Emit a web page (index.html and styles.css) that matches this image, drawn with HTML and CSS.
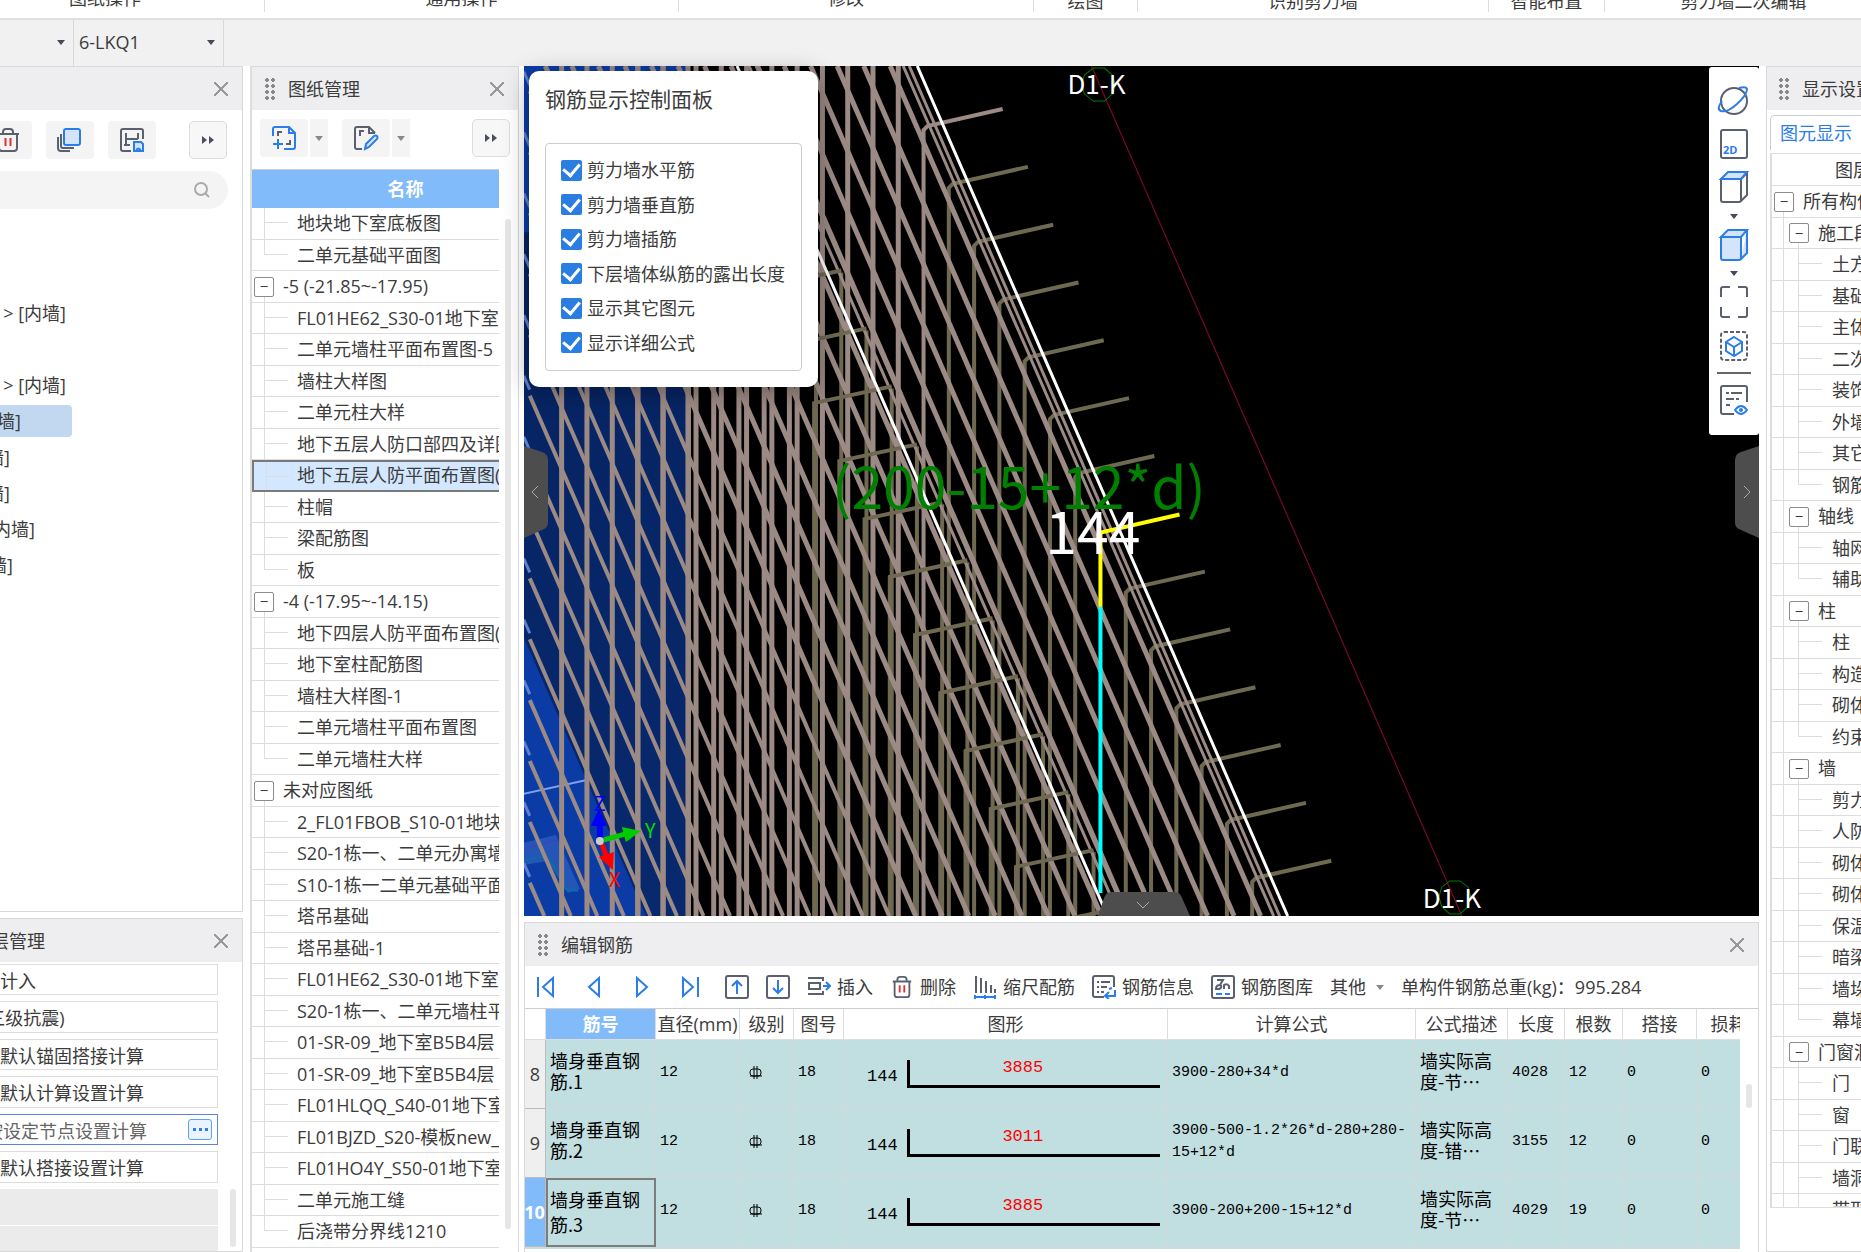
FILE: index.html
```html
<!DOCTYPE html>
<html lang="zh-CN">
<head>
  <meta charset="UTF-8">
  <meta name="viewport" content="width=device-width, initial-scale=1.0">
  <title>编辑钢筋</title>
  <link rel="stylesheet" href="styles.css">
</head>
<body>

<nav class="ribbon">
  <div class="group g1">图纸操作 <i class="caret"></i></div>
  <div class="group g2">通用操作 <i class="caret"></i></div>
  <div class="group g3">修改 <i class="caret"></i></div>
  <div class="group low g4">绘图</div>
  <div class="group low g5">识别剪力墙</div>
  <div class="group low g6">智能布置</div>
  <div class="group low g7">剪力墙二次编辑</div>
</nav>

<div class="selectors">
  <button class="combo short" aria-label="类型"><i class="caret"></i></button>
  <button class="combo"><span>6-LKQ1</span><i class="caret"></i></button>
</div>

<main>
  <!-- 构件列表 -->
  <div class="side">
    <section class="panel list-panel">
      <header class="panel-head"><span></span><button class="close" aria-label="关闭"></button></header>
      <div class="tools left-tools">
        <button class="tool" aria-label="删除"><svg width="26" height="26" viewBox="0 0 26 26"><g class="ink"><path d="M2 7h22M8 7V5q0-3 3-3h4q3 0 3 3v2M4 7v14q0 3 3 3h12q3 0 3-3V7"/></g><path class="red" d="M10.500 11v8M15.500 11v8"/></svg></button>
        <button class="tool" aria-label="复制"><svg width="26" height="26" viewBox="0 0 26 26"><path class="blue tint" d="M9 2h12q2 0 2 2v12q0 2-2 2H9q-2 0-2-2V4q0-2 2-2z"/><path class="ink" d="M4 7v12q0 2 2 2h11M1 10v11q0 3 3 3h9"/></svg></button>
        <button class="tool" aria-label="存档"><svg width="26" height="26" viewBox="0 0 26 26"><path class="ink" d="M12 24H4q-2 0-2-2V4q0-2 2-2h18q2 0 2 2v8M7 6v12M7 12h12M19 6v6M5 18h6"/><path class="blue tint" d="M15 15h7l2 2v7h-9z"/><path class="blue" d="M17 24q2-5 5 0"/></svg></button>
        <button class="more" aria-label="更多"><svg width="18" height="12" viewBox="0 0 18 12"><path class="solid" d="M3 2l5 4-5 4zM10 2l5 4-5 4z"/></svg></button>
      </div>
      <div class="search"><input type="text" aria-label="搜索"><svg width="18" height="18" viewBox="0 0 18 18"><circle cx="8" cy="8" r="6"/><path d="M12 12l4 4"/></svg></div>
      <ul class="parts">
        <li>&gt; [内墙]</li>
        <li class="blank"></li>
        <li>&gt; [内墙]</li>
        <li class="on">[内墙]</li>
        <li class="end10">[内墙]</li>
        <li class="end10">[内墙]</li>
        <li class="end35">[内墙]</li>
        <li class="end13">[内墙]</li>
      </ul>
    </section>

    <!-- 属性列表 -->
    <section class="panel props-panel">
      <header class="panel-head"><span class="cut-title">图层管理</span><button class="close" aria-label="关闭"></button></header>
      <div class="props">
        <form>
          <input type="text" aria-label="计入方式" value="不计入">
          <input type="text" aria-label="抗震等级" value="(三级抗震)">
          <input type="text" aria-label="锚固搭接" value="按默认锚固搭接计算">
          <input type="text" aria-label="计算设置" value="按默认计算设置计算">
          <div class="field"><input type="text" aria-label="节点设置" value="按设定节点设置计算"><button type="button" class="dots" aria-label="选择"><i></i><i></i><i></i></button></div>
          <input type="text" aria-label="搭接设置" value="按默认搭接设置计算">
          <div class="grey"></div>
          <div class="grey"></div>
        </form>
        <div class="scroll"></div>
      </div>
    </section>
  </div>

  <!-- 图纸管理 -->
  <section class="panel drawings">
    <header class="panel-head"><i class="grip"></i><h2>图纸管理</h2><button class="close" aria-label="关闭"></button></header>
    <div class="tools">
      <div class="split">
        <button class="tool" aria-label="添加图纸"><svg width="26" height="26" viewBox="0 0 26 26"><path class="blue" d="M2 11V4q0-2 2-2h14l6 6v14q0 2-2 2h-9M18 2v6h6M2 19h10M7 14v10"/><path class="ink" d="M7 11V7h4M19 15v4h-4"/></svg></button>
        <button class="drop" aria-label="展开"><i class="caret grey-caret"></i></button>
      </div>
      <div class="split">
        <button class="tool" aria-label="编辑图纸"><svg width="26" height="26" viewBox="0 0 26 26"><path class="ink" d="M9 24H4q-2 0-2-2V4q0-2 2-2h12l6 6M16 2v6h6M7 11V6h4"/><path class="blue tint" d="M12 24l1-5 8-8q2-1 3 0t0 3l-8 8z"/></svg></button>
        <button class="drop" aria-label="展开"><i class="caret grey-caret"></i></button>
      </div>
      <button class="more" aria-label="更多"><svg width="18" height="12" viewBox="0 0 18 12"><path class="solid" d="M3 2l5 4-5 4zM10 2l5 4-5 4z"/></svg></button>
    </div>
    <div class="drawing-body">
      <div class="drawing-tree">
        <div class="tree-title">名称</div>
        <ul class="tree">
          <li>地块地下室底板图</li>
          <li class="last">二单元基础平面图</li>
          <li class="node"><button>−</button>-5 (-21.85~-17.95)</li>
          <li>FL01HE62_S30-01地下室</li>
          <li>二单元墙柱平面布置图-5</li>
          <li>墙柱大样图</li>
          <li>二单元柱大样</li>
          <li>地下五层人防口部四及详图</li>
          <li class="current">地下五层人防平面布置图(</li>
          <li>柱帽</li>
          <li>梁配筋图</li>
          <li class="last">板</li>
          <li class="node"><button>−</button>-4 (-17.95~-14.15)</li>
          <li>地下四层人防平面布置图(</li>
          <li>地下室柱配筋图</li>
          <li>墙柱大样图-1</li>
          <li>二单元墙柱平面布置图</li>
          <li class="last">二单元墙柱大样</li>
          <li class="node"><button>−</button>未对应图纸</li>
          <li>2_FL01FBOB_S10-01地块</li>
          <li>S20-1栋一、二单元办寓墙</li>
          <li>S10-1栋一二单元基础平面</li>
          <li>塔吊基础</li>
          <li>塔吊基础-1</li>
          <li>FL01HE62_S30-01地下室</li>
          <li>S20-1栋一、二单元墙柱平</li>
          <li>01-SR-09_地下室B5B4层</li>
          <li>01-SR-09_地下室B5B4层</li>
          <li>FL01HLQQ_S40-01地下室</li>
          <li>FL01BJZD_S20-模板new_</li>
          <li>FL01HO4Y_S50-01地下室</li>
          <li>二单元施工缝</li>
          <li class="last">后浇带分界线1210</li>
        </ul>
      </div>
      <div class="scroll"></div>
    </div>
  </section>

  <div class="center">
    <!-- 三维视图 -->
    <section class="view">
      <svg class="scene" viewBox="524 66 1234 849" preserveAspectRatio="xMidYMid slice">
        <defs>
          <linearGradient id="wall" x1="0" y1="0" x2="0" y2="1"><stop offset="0" stop-color="#06225e"/><stop offset="1" stop-color="#08296e"/></linearGradient>
        </defs>
        <rect x="524" y="66" width="1234" height="849" fill="#000"/>
        <rect x="524" y="66" width="162" height="849" fill="url(#wall)"/>
        <path d="M524 637L646 915H524zM524 66h162v14H530V232h-6z" fill="#0b3ca6"/>
        <path d="M524 842l32-8 24 54-12 4-20-32-24 4z" fill="#2456b8"/>
        <path d="M524 848l32-9" stroke="#4a3cc0"/>
        <path d="M524 860q22-8 28 2l14 26 12 2" fill="none" stroke="#0f6aa8" stroke-width="2"/>
        <path d="M524 793l64-14" stroke="#7f9fe8" stroke-width="2"/>
        <g id="back"></g>
        <g id="bars"></g>
        <g id="hooks"></g>
        <path d="M737 66L1107 915M917 66L1287 915" stroke="#fff" stroke-width="3"/>
        <path d="M1091 66L1461 915" stroke="#7a0826" stroke-width="1.200"/>
        <path d="M1093 68h11l8 7 3 10-3 9-8 7h-11l-9-7-3-9 3-10zM1449 880h10l8 6 3 10-3 10-8 7h-10l-8-7-3-10 3-10z" fill="none" stroke="#007a00"/>
        <path d="M1100 606V892" stroke="#0ff" stroke-width="4"/>
        <path d="M1179 514L1100 532V606" fill="none" stroke="#ff0" stroke-width="4"/>
        <text class="mark" x="1067" y="94">D1-K</text>
        <text class="mark" x="1422" y="907">D1-K</text>
        <text class="formula" x="832" y="508">(200-15+12*d)</text>
        <text class="bend" x="1045" y="553">144</text>
        <g class="axis">
          <path d="M600 838V820" stroke="#00f" stroke-width="6"/><path d="M599 808l8 17h-16z" fill="#00f"/>
          <path d="M604 839l22-6" stroke="#0c0" stroke-width="5"/><path d="M641 830l-19-4 4 15z" fill="#0c0"/>
          <path d="M602 843l5 14" stroke="#f00" stroke-width="5"/><path d="M613 869l-14-13 15-5z" fill="#f00"/>
          <circle cx="600" cy="840" r="4" fill="#ccc"/>
          <text x="594" y="810" fill="#00f">Z</text>
          <text x="645" y="837" fill="#0d0">Y</text>
          <text x="609" y="886" fill="#f00">X</text>
        </g>
      </svg>

      <form class="control-card">
        <h3>钢筋显示控制面板</h3>
        <div class="options">
          <label><input type="checkbox" checked>剪力墙水平筋</label>
          <label><input type="checkbox" checked>剪力墙垂直筋</label>
          <label><input type="checkbox" checked>剪力墙插筋</label>
          <label><input type="checkbox" checked>下层墙体纵筋的露出长度</label>
          <label><input type="checkbox" checked>显示其它图元</label>
          <label><input type="checkbox" checked>显示详细公式</label>
        </div>
      </form>

      <div class="view-tools">
        <button aria-label="动态观察"><svg width="34" height="34" viewBox="0 0 34 34"><circle class="ink" cx="17" cy="17" r="13"/><path class="blue" d="M5 17q-6 8-1 10 6 2 16-7T30 5q-1-3-8-1"/></svg></button>
        <button aria-label="二维"><svg width="34" height="34" viewBox="0 0 34 34"><rect class="ink" x="4" y="3" width="26" height="28" rx="2"/><text x="6" y="27">2D</text></svg></button>
        <button aria-label="视图"><svg width="34" height="34" viewBox="0 0 34 34"><path class="ink" d="M4 9h20v21q0 2-2 2H6q-2 0-2-2zM24 9l6-6v22l-6 6"/><path class="blue tint" d="M4 9l7-7h19l-6 7z"/></svg></button>
        <i class="caret"></i>
        <button aria-label="着色"><svg width="34" height="34" viewBox="0 0 34 34"><path class="blue tint" d="M4 9h20v21q0 2-2 2H6q-2 0-2-2zM4 9l7-7h19l-6 7zM30 2v23l-6 6"/></svg></button>
        <i class="caret"></i>
        <button aria-label="全屏"><svg width="34" height="34" viewBox="0 0 34 34"><path class="ink" d="M4 12V4q0-2 2-2h7M21 2h7q2 0 2 2v8M30 22v8q0 2-2 2h-7M13 32H6q-2 0-2-2v-8"/></svg></button>
        <button aria-label="局部三维"><svg width="34" height="34" viewBox="0 0 34 34"><rect class="ink dash" x="4" y="3" width="26" height="28" rx="3"/><path class="blue" d="M17 8l8 5v9l-8 5-8-5v-9zM9 13l8 5 8-5M17 18v9"/></svg></button>
        <hr>
        <button aria-label="显示设置"><svg width="34" height="34" viewBox="0 0 34 34"><path class="ink" d="M30 19V5q0-2-2-2H6q-2 0-2 2v24q0 2 2 2h11M9 10h3M14 10h11M9 16h8M19 16h3M9 22h4"/><path class="blue" d="M18 27q6-8 12 0-6 8-12 0z"/><circle cx="24" cy="27" r="2" fill="#2b7de9"/></svg></button>
      </div>

      <button class="fold fold-left" aria-label="收起左侧"><svg width="24" height="92" viewBox="0 0 24 92"><path d="M0 0l18 6q6 2 6 8v63q0 5-6 7L0 92z"/><polyline points="14,40 8,46 14,52"/></svg></button>
      <button class="fold fold-right" aria-label="收起右侧"><svg width="24" height="92" viewBox="0 0 24 92"><path d="M24 0L6 6q-6 2-6 8v63q0 5 6 7l18 8z"/><polyline points="9,40 15,46 9,52"/></svg></button>
      <button class="fold fold-bottom" aria-label="收起下方"><svg width="92" height="24" viewBox="0 0 92 24"><path d="M0 24L6 6q2-6 8-6h63q5 0 7 6l8 18z"/><polyline points="39,10 45,16 51,10"/></svg></button>
    </section>

    <!-- 编辑钢筋 -->
    <section class="panel rebar">
      <header class="panel-head"><i class="grip"></i><h2>编辑钢筋</h2><button class="close" aria-label="关闭"></button></header>
      <div class="rebar-tools">
        <div class="nav-btns">
          <button aria-label="首条"><svg width="20" height="24" viewBox="0 0 20 24"><path class="blue" d="M2 2v20M17 3v18L7 12z"/></svg></button>
          <button aria-label="上一条"><svg width="20" height="24" viewBox="0 0 20 24"><path class="blue" d="M15 3v18L5 12z"/></svg></button>
          <button aria-label="下一条"><svg width="20" height="24" viewBox="0 0 20 24"><path class="blue" d="M5 3v18l10-9z"/></svg></button>
          <button aria-label="末条"><svg width="20" height="24" viewBox="0 0 20 24"><path class="blue" d="M18 2v20M3 3v18l10-9z"/></svg></button>
        </div>
        <button aria-label="上移"><svg width="24" height="24" viewBox="0 0 24 24"><rect class="ink" x="1" y="1" width="22" height="22" rx="2"/><path class="blue" d="M12 19V6M7 11l5-5 5 5"/></svg></button>
        <button aria-label="下移"><svg width="24" height="24" viewBox="0 0 24 24"><rect class="ink" x="1" y="1" width="22" height="22" rx="2"/><path class="blue" d="M12 5v13M7 13l5 5 5-5"/></svg></button>
        <button><svg width="24" height="24" viewBox="0 0 24 24"><path class="ink" d="M1 3h15v3M2 8h11v6H2zM1 19h15v-3"/><path class="blue" d="M16 11h7M19 7l4 4-4 4"/></svg>插入</button>
        <button><svg width="24" height="24" viewBox="0 0 26 26"><g class="ink"><path d="M3 7h20M8 7V5q0-3 3-3h4q3 0 3 3v2M5 7v14q0 3 3 3h10q3 0 3-3V7"/></g><path class="red" d="M10.500 11v8M15.500 11v8"/></svg>删除</button>
        <button><svg width="24" height="24" viewBox="0 0 24 24"><path class="ink" d="M3 1v17M8 3v15M13 6v12M18 10v8M22 14v4"/><path class="blue" d="M2 22h20M2 20v4M12 20v4M22 20v4"/></svg>缩尺配筋</button>
        <button><svg width="24" height="24" viewBox="0 0 24 24"><path class="ink" d="M22 12V3q0-2-2-2H3Q1 1 1 3v17q0 2 2 2h9M5 7h2M9 7h9M5 12h2M9 12h6M5 17h2M9 17h3"/><path class="blue" d="M23 15v6h-9M17 17l-4 4 4 3M17 14l3-1"/></svg>钢筋信息</button>
        <button><svg width="24" height="24" viewBox="0 0 24 24"><rect class="ink" x="1" y="1" width="22" height="22" rx="2"/><path class="ink" d="M6 5h6l-3 5q-4 0-4 4h3q3-1 2-4M13 14v-4q3-2 5 1v3"/><path class="blue" d="M5 19h6M14 19h5"/></svg>钢筋图库</button>
        <button>其他<i class="caret grey-caret"></i></button>
        <span>单构件钢筋总重(kg)：995.284</span>
      </div>
      <div class="grid-wrap">
        <div class="grid-clip">
          <table>
            <colgroup><col class="c-no"><col class="c-name"><col class="c-dia"><col class="c-lvl"><col class="c-fig"><col class="c-shape"><col class="c-calc"><col class="c-desc"><col class="c-len"><col class="c-num"><col class="c-lap"><col class="c-loss"></colgroup>
            <thead>
              <tr><th></th><th class="active">筋号</th><th>直径(mm)</th><th>级别</th><th>图号</th><th>图形</th><th>计算公式</th><th>公式描述</th><th>长度</th><th>根数</th><th>搭接</th><th>损耗</th></tr>
            </thead>
            <tbody>
              <tr>
                <th>8</th><td class="cn">墙身垂直钢筋.1</td><td>12</td>
                <td class="lvl"><svg width="16" height="16" viewBox="0 0 16 16"><path d="M6 1v13M9 1v13M2 11h12"/><rect x="2" y="4" width="11" height="7" rx="3"/></svg></td>
                <td>18</td><td class="shape"><div><span>144</span><div class="bar">3885</div></div></td>
                <td>3900-280+34*d</td><td class="cn">墙实际高度-节…</td><td>4028</td><td>12</td><td>0</td><td>0</td>
              </tr>
              <tr>
                <th>9</th><td class="cn">墙身垂直钢筋.2</td><td>12</td>
                <td class="lvl"><svg width="16" height="16" viewBox="0 0 16 16"><path d="M6 1v13M9 1v13M2 11h12"/><rect x="2" y="4" width="11" height="7" rx="3"/></svg></td>
                <td>18</td><td class="shape"><div><span>144</span><div class="bar">3011</div></div></td>
                <td>3900-500-1.2*26*d-280+280-<br>15+12*d</td><td class="cn">墙实际高度-错…</td><td>3155</td><td>12</td><td>0</td><td>0</td>
              </tr>
              <tr class="picked">
                <th>10</th><td class="cn editing">墙身垂直钢筋.3</td><td>12</td>
                <td class="lvl"><svg width="16" height="16" viewBox="0 0 16 16"><path d="M6 1v13M9 1v13M2 11h12"/><rect x="2" y="4" width="11" height="7" rx="3"/></svg></td>
                <td>18</td><td class="shape"><div><span>144</span><div class="bar">3885</div></div></td>
                <td>3900-200+200-15+12*d</td><td class="cn">墙实际高度-节…</td><td>4029</td><td>19</td><td>0</td><td>0</td>
              </tr>
            </tbody>
          </table>
        </div>
        <div class="scroll"></div>
      </div>
    </section>
  </div>

  <!-- 显示设置 -->
  <section class="panel display">
    <header class="panel-head"><i class="grip"></i><h2>显示设置</h2></header>
    <div class="tabs"><button>图元显示</button></div>
    <div class="layer-box">
      <div class="layer-title">图层</div>
      <ul class="tree deep">
        <li class="node root"><button>−</button>所有构件</li>
        <li class="node"><button>−</button>施工段</li>
        <li>土方</li>
        <li>基础</li>
        <li>主体</li>
        <li>二次</li>
        <li>装饰</li>
        <li>外墙</li>
        <li>其它</li>
        <li class="last">钢筋</li>
        <li class="node"><button>−</button>轴线</li>
        <li>轴网</li>
        <li class="last">辅助</li>
        <li class="node"><button>−</button>柱</li>
        <li>柱</li>
        <li>构造</li>
        <li>砌体</li>
        <li class="last">约束</li>
        <li class="node"><button>−</button>墙</li>
        <li>剪力</li>
        <li>人防</li>
        <li>砌体</li>
        <li>砌体</li>
        <li>保温</li>
        <li>暗梁</li>
        <li>墙垛</li>
        <li class="last">幕墙</li>
        <li class="node"><button>−</button>门窗洞</li>
        <li>门</li>
        <li>窗</li>
        <li>门联</li>
        <li>墙洞</li>
        <li>带形</li>
      </ul>
    </div>
  </section>
</main>

<script src="script.js"></script>
</body>
</html>
```
FILE: styles.css
```css
* { margin: 0; padding: 0; box-sizing: border-box; }
body {
  height: 100vh;
  display: flex;
  flex-direction: column;
  overflow: hidden;
  background: #fff;
  color: #3c3c3c;
  font: 18px/26px "Open Sans", "Noto Sans CJK SC", sans-serif;
  white-space: nowrap;
}
button, input { font: inherit; color: inherit; border: none; background: none; }
button { display: flex; align-items: center; justify-content: center; cursor: pointer; }
h2, h3 { font-size: 18px; font-weight: normal; }
ul { list-style: none; }
svg { flex: none; display: block; }

.ink { fill: none; stroke: #5a6070; stroke-width: 2; }
.blue { fill: none; stroke: #2b7de9; stroke-width: 2; }
.red { fill: none; stroke: #e03030; stroke-width: 2; }
.tint { fill: #d3e4fb; }
.dash { stroke-dasharray: 4 2; }
.solid { fill: #4a4f5c; }

.caret {
  flex: none;
  border: 4px solid transparent;
  border-top: 5px solid #444a58;
  border-bottom: none;
}
.grey-caret { border-top-color: #888; }

/* 顶部功能区 */
.ribbon {
  flex: none;
  height: 20px;
  display: flex;
  overflow: hidden;
  border-bottom: 2px solid #e0e0e0;
}
.group {
  flex: none;
  height: 12px;
  display: flex;
  align-items: flex-end;
  justify-content: center;
  gap: 12px;
  line-height: 18px;
  padding-bottom: 5px;
  border-right: 1px solid #ddd;
}
.group .caret { margin-bottom: 7px; }
.low { padding-bottom: 2px; }
.g1 { width: 299px; margin-left: -34px; }
.g2 { width: 414px; }
.g3 { width: 355px; }
.g4 { width: 104px; }
.g5 { width: 351px; }
.g6 { width: 116px; }
.g7 { width: 278px; }

.selectors {
  flex: none;
  height: 46px;
  display: flex;
  background: #f1f1f1;
}
.combo {
  width: 150px;
  justify-content: space-between;
  padding: 0 8px 2px 5px;
  border-right: 1px solid #d8d8d8;
}
.short { width: 74px; justify-content: flex-end; }

main { flex: 1; min-height: 0; display: flex; }

.panel {
  display: flex;
  flex-direction: column;
  min-height: 0;
  border: 1px solid #d9d9d9;
  background: #fff;
}
.panel-head {
  flex: none;
  height: 43px;
  display: flex;
  align-items: center;
  padding: 0 14px 0 13px;
  background: #eeeef0;
}
.grip {
  width: 10px;
  height: 22px;
  margin-right: 13px;
  background: radial-gradient(circle at 2px 2px, #888 2px, transparent 2px) 0 0 / 6px 6px;
}
.close {
  width: 14px;
  height: 14px;
  margin-left: auto;
  background:
    linear-gradient(45deg, transparent 46%, #999 46%, #999 54%, transparent 54%),
    linear-gradient(-45deg, transparent 46%, #999 46%, #999 54%, transparent 54%);
}

.tools { display: flex; align-items: flex-start; height: 59px; padding: 9px 8px 0; }
.tool { width: 48px; height: 38px; background: #f4f4f4; border-radius: 4px; }
.more {
  width: 38px;
  height: 38px;
  margin-left: auto;
  background: #f7f7f7;
  border: 1px solid #ddd;
  border-radius: 5px;
}
.split { display: flex; gap: 2px; margin-right: 14px; }
.drop { width: 18px; height: 38px; background: #f4f4f4; }

.scroll { background: #e6e6e6; border-radius: 3px; width: 6px; }

/* 左侧 */
.side { flex: none; width: 243px; margin-right: 7px; display: flex; flex-direction: column; gap: 6px; }
.side .panel { border-left: none; }
.list-panel { flex: 1; }
.left-tools { height: 61px; padding: 11px 15px 0 0; gap: 14px; margin-left: -16px; }
.search {
  width: 228px;
  height: 38px;
  display: flex;
  align-items: center;
  padding-right: 17px;
  background: #f4f4f4;
  border-radius: 0 19px 19px 0;
}
.search input { flex: 1; min-width: 0; }
.search svg { fill: none; stroke: #aaa; stroke-width: 2; }
.parts { padding-top: 88px; }
.parts li {
  width: 66px;
  height: 32px;
  margin-bottom: 4px;
  display: flex;
  align-items: center;
  justify-content: flex-end;
  overflow: hidden;
}
.parts .on { width: 72px; padding-right: 51px; background: #c1d8f0; border-radius: 0 4px 4px 0; }
.parts .end10 { width: 10px; }
.parts .end13 { width: 13px; }
.parts .end35 { width: 35px; }

.props-panel { flex: none; height: 334px; }
.cut-title { width: 45px; margin-left: -13px; display: flex; justify-content: flex-end; overflow: hidden; }
.props { flex: 1; min-height: 0; display: flex; overflow: hidden; }
.props form {
  flex: none;
  width: 242px;
  margin-left: -24px;
  padding-top: 2px;
  display: flex;
  flex-direction: column;
  gap: 6px;
}
.props form > * { flex: none; height: 31px; }
.props form > :nth-child(even) { height: 32px; }
.props form > input { padding-left: 5px; border: 1px solid #ddd; }
.field {
  display: flex;
  align-items: center;
  padding-right: 5px;
  border: 1px solid #5b84dc;
}
.field input { flex: 1; min-width: 0; height: 29px; padding-left: 8px; color: #666; }
.dots { width: 24px; height: 21px; gap: 3px; border: 1px solid #5aa5ee; border-radius: 3px; background: #eaf3fd; }
.dots i { width: 3px; height: 3px; background: #2b7de9; }
.props form > .grey { height: 36px; margin-bottom: -5px; background: #ebebeb; }
.props .scroll { height: 58px; margin: auto 0 4px 12px; }

/* 图纸管理 */
.drawings { flex: none; width: 269px; margin-right: 5px; border-left: 2px solid #ddd; border-bottom: none; }
.drawing-body { flex: 1; min-height: 0; display: flex; }
.drawing-tree { width: 247px; overflow: hidden; border-top: 1px solid #ccc; }
.tree-title {
  height: 38px;
  line-height: 38px;
  padding-left: 60px;
  text-align: center;
  font-weight: bold;
  color: #fff;
  background: #81bbf9;
}
.drawing-body .scroll { margin: 50px 0 23px 6px; }

.tree li {
  height: 31px;
  line-height: 31px;
  padding-left: 45px;
  overflow: hidden;
  border-bottom: 1px solid #dcdcdc;
  background:
    linear-gradient(#ddd, #ddd) 12px 0 / 1px 100% no-repeat,
    linear-gradient(#ddd, #ddd) 12px 14px / 24px 1px no-repeat;
}
.tree li:nth-child(odd) { height: 32px; }
.tree .last {
  background:
    linear-gradient(#ddd, #ddd) 12px 0 / 1px 14px no-repeat,
    linear-gradient(#ddd, #ddd) 12px 14px / 24px 1px no-repeat;
}
.tree .node {
  display: flex;
  align-items: center;
  padding-left: 2px;
  background: linear-gradient(#ddd, #ddd) 12px 25px / 1px 6px no-repeat;
}
.tree button {
  flex: none;
  width: 20px;
  height: 20px;
  margin-right: 9px;
  border: 1px solid #8c8c8c;
  border-radius: 2px;
  background: #fff;
  font-size: 15px;
  line-height: 15px;
}
.tree .current {
  border: 2px solid #7a7a7a;
  border-right: none;
  padding-left: 43px;
  line-height: 26px;
  background-color: #d3e8fe;
}

/* 视图 */
.center { flex: 1; min-width: 0; display: flex; flex-direction: column; gap: 6px; }
.view { flex: 1; min-height: 0; position: relative; z-index: 1; }
.scene { position: absolute; width: 100%; height: 100%; }
.scene text { font-family: "Noto Sans CJK SC", sans-serif; }
.mark { font-size: 26px; fill: #fff; }
.formula { font-size: 57px; fill: #008000; }
.bend { font-size: 57px; fill: #fff; }
.axis text { font-size: 20px; }

.control-card {
  position: absolute;
  left: 5px;
  top: 5px;
  width: 289px;
  padding: 13px 16px 16px;
  background: #fff;
  border-radius: 10px;
  box-shadow: 0 4px 24px rgba(0, 0, 0, 0.35);
}
.control-card h3 { font-size: 21px; line-height: 30px; margin-bottom: 29px; }
.options {
  padding: 9px 15px 10px;
  border: 1px solid #ccc;
  border-radius: 4px;
}
.options label { display: flex; align-items: center; height: 34px; }
.options label:nth-child(even) { height: 35px; }
.options input {
  appearance: none;
  width: 21px;
  height: 21px;
  margin-right: 5px;
  display: grid;
  place-items: center;
  background: #2a7de1;
  border-radius: 2px;
}
.options input:checked::before {
  content: "";
  width: 8px;
  height: 13px;
  margin-bottom: 4px;
  border: solid #fff;
  border-width: 0 3px 3px 0;
  transform: rotate(40deg);
}

.view-tools {
  position: absolute;
  right: 0;
  top: 1px;
  width: 50px;
  height: 368px;
  padding: 17px 0 18px;
  display: flex;
  flex-direction: column;
  align-items: center;
  justify-content: space-between;
  background: #fff;
  border-radius: 3px;
}
.view-tools text { font-size: 11px; font-weight: bold; fill: #2b7de9; }
.view-tools hr { width: 34px; border: none; border-top: 2px solid #666; }

.fold { position: absolute; }
.fold path { fill: #4d4d4d; }
.fold polyline { fill: none; stroke: #aaa; stroke-width: 1; }
.fold-left { left: 0; top: 380px; }
.fold-right { right: 0; top: 380px; }
.fold-bottom { left: 46.5%; bottom: 0; }

/* 编辑钢筋 */
.rebar { flex: none; height: 330px; border-bottom: none; }
.rebar-tools {
  flex: none;
  height: 42px;
  display: flex;
  align-items: center;
  gap: 17px;
  padding: 0 11px;
}
.rebar-tools button { gap: 6px; }
.nav-btns { display: flex; gap: 28px; margin-right: 8px; }
.rebar-tools .grey-caret { margin-left: 4px; }
.grid-wrap { flex: 1; display: flex; border-top: 1px solid #ccc; }
.grid-clip { flex: 1; min-width: 0; height: 240px; overflow: hidden; background: #c1dee0; }
.grid-wrap .scroll { height: 24px; margin: 75px 6px 0; }
table { width: calc(100% + 21px); table-layout: fixed; border-collapse: separate; border-spacing: 0; }
.c-no { width: 21px; }
.c-name { width: 110px; }
.c-dia { width: 84px; }
.c-lvl { width: 54px; }
.c-fig { width: 50px; }
.c-calc { width: 248px; }
.c-desc { width: 92px; }
.c-len { width: 57px; }
.c-num { width: 58px; }
.c-lap { width: 74px; }
.c-loss { width: 64px; }
thead th {
  height: 31px;
  font-weight: normal;
  background: #fff;
  border-right: 1px solid #ddd;
  border-bottom: 1px solid #ddd;
}
thead .active { background: #81bbf9; color: #fff; font-weight: bold; }
tbody th {
  font-weight: normal;
  background: #efefef;
  border-right: 1px solid #bbb;
  border-bottom: 1px solid #bbb;
}
tbody td {
  height: 69px;
  padding: 0 4px 2px;
  color: #000;
  font: 15px/22px "Liberation Mono", "Noto Sans CJK SC", monospace;
  background: #c1dee0;
  border-right: 1px solid #d3d8d8;
  border-bottom: 1px solid #d3d8d8;
}
tbody .cn {
  padding-bottom: 6px;
  font-size: 18px;
  line-height: 21px;
  white-space: normal;
  font-family: "Noto Sans CJK SC", sans-serif;
}
tbody .lvl { padding-left: 8px; }
.lvl svg { fill: none; stroke: #000; stroke-width: 1; }
tbody .shape { padding: 0 7px 0 23px; font-size: 17px; }
.shape > div { display: flex; gap: 9px; align-items: flex-end; }
.bar {
  flex: 1;
  height: 28px;
  padding-right: 24px;
  text-align: center;
  line-height: 16px;
  color: #f00;
  border: solid #000;
  border-width: 0 0 3px 3px;
}
.picked th { background: #81bbf9; color: #fff; font-weight: bold; text-indent: -1px; }
tbody .editing { line-height: 25px; padding: 0 2px 2px; border: 2px solid #7d7d7d; }

/* 显示设置 */
.display { flex: none; width: 95px; margin-left: 7px; border-right: none; overflow: hidden; }
.display .panel-head { padding-left: 12px; }
.display .grip { flex: none; }
.tabs { flex: none; height: 43px; display: flex; padding: 5px 0 0 3px; }
.tabs button {
  flex: none;
  width: 96px;
  height: 35px;
  justify-content: flex-start;
  padding-left: 9px;
  color: #2b7de9;
  border: 1px solid #ccc;
  border-bottom: none;
  border-radius: 5px 5px 0 0;
}
.layer-box { height: 1055px; overflow: hidden; margin-left: 3px; border: 1px solid #ddd; border-left: 2px solid #ddd; border-right: none; }
.layer-title { height: 32px; padding-left: 63px; line-height: 32px; border-bottom: 1px solid #ddd; }
.deep li {
  padding-left: 60px;
  background:
    linear-gradient(#ddd, #ddd) 11px 0 / 1px 100% no-repeat,
    linear-gradient(#ddd, #ddd) 26px 0 / 1px 100% no-repeat,
    linear-gradient(#ddd, #ddd) 26px 14px / 24px 1px no-repeat;
}
.deep .last {
  background:
    linear-gradient(#ddd, #ddd) 11px 0 / 1px 100% no-repeat,
    linear-gradient(#ddd, #ddd) 26px 0 / 1px 14px no-repeat,
    linear-gradient(#ddd, #ddd) 26px 14px / 24px 1px no-repeat;
}
.deep .node {
  padding-left: 17px;
  background:
    linear-gradient(#ddd, #ddd) 11px 0 / 1px 100% no-repeat,
    linear-gradient(#ddd, #ddd) 26px 25px / 1px 6px no-repeat;
}
.deep .root { padding-left: 2px; background: linear-gradient(#ddd, #ddd) 11px 25px / 1px 6px no-repeat; }
```
FILE: script.js
```js
const NS = 'http://www.w3.org/2000/svg';
const pink = '#9c8a84';
const olive = '#6f6952';

function draw(layer, d, color, width) {
  const path = document.createElementNS(NS, 'path');
  path.setAttribute('d', d);
  path.setAttribute('fill', 'none');
  path.setAttribute('stroke', color);
  path.setAttribute('stroke-width', width);
  document.getElementById(layer).appendChild(path);
}

// far layer of vertical bars with their bent ends
for (let i = -7; i <= 10; i++) {
  const x = 814.5 + 25.2 * i;
  const y = 402 + 57.9 * i;
  const color = i < 0 ? pink : olive;
  draw('back', `M${x} ${Math.max(y, 66)}V915`, color, 5);
  if (i > -4) {
    draw('back', `M${x + 77} ${y - 14}V915`, olive, 4);
    draw('hooks', `M${x - 2} ${y + 1}L${x + 77} ${y - 16}`, olive, 4);
  }
}
for (let x = 663; x > 545; x -= 25.3) {
  draw('back', `M${x} 66V915`, pink, 5);
}
draw('back', 'M688 66V915', pink, 5);

// near layer
for (let i = -9; i <= 13; i++) {
  const x = 923.3 + 25.25 * i;
  const y = 127 + 57.75 * i;
  const color = i < 1 ? pink : olive;
  if (i < 0) {
    draw('bars', `M${x} 66V915`, color, 5);
  } else if (i !== 7) {
    draw('bars', `M${x} 915V${y + 3}L${x + 4} ${y - 1}L${x + 79} ${y - 18}`, color, 4);
  }
}

// horizontal bars run parallel to the wall edge
for (let x = 1260; x > 524; x -= 26.5) {
  const x0 = x - 370;
  if (x0 >= 530) {
    draw('bars', `M${x0} 66L${x} 915`, pink, 5);
  } else {
    draw('bars', `M530 ${66 + (530 - x0) * 2.295}L${x} 915`, pink, 4);
    draw('back', `M524 ${60 + (524 - x0) * 2.295}L530 ${60 + (530 - x0) * 2.295}`, '#5f80d0', 3);
  }
}
draw('bars', 'M903 66L1273 915M909 66L1279 915', pink, 3);
draw('bars', 'M749 66L1119 915M756 66L1126 915', pink, 3);
```
